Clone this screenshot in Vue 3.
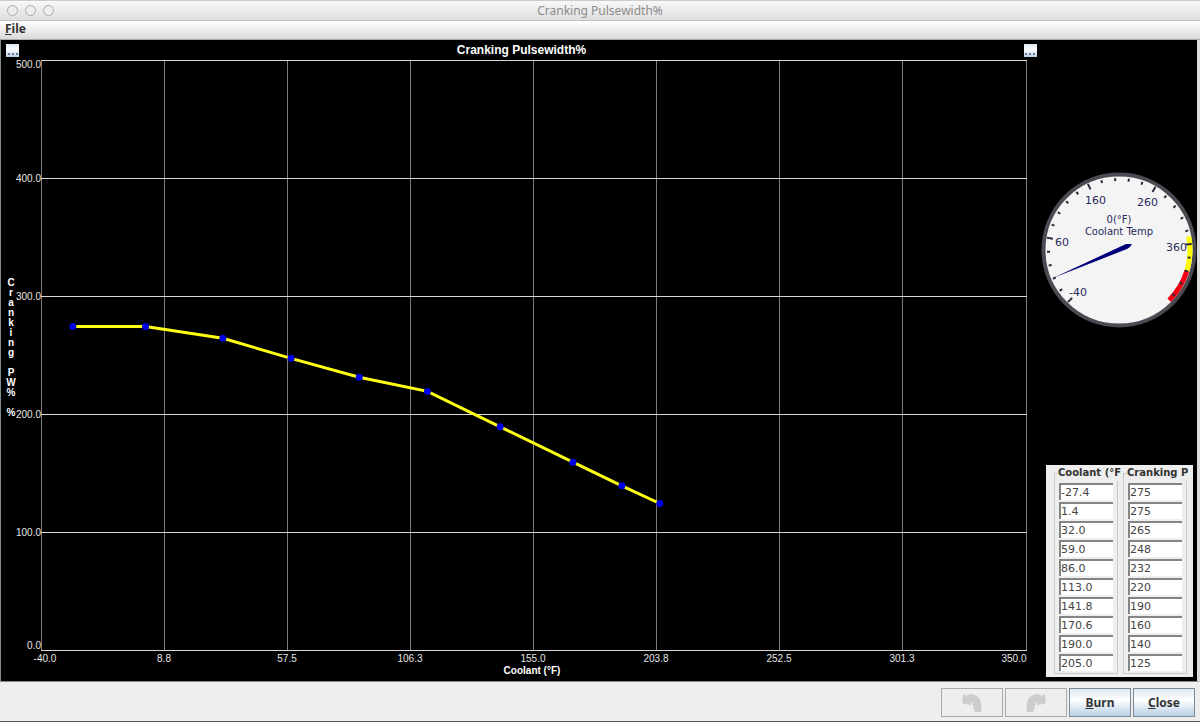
<script setup>
import { computed, ref } from 'vue'

const coolant = ref(['-27.4', '1.4', '32.0', '59.0', '86.0', '113.0', '141.8', '170.6', '190.0', '205.0'])
const cranking = ref(['275', '275', '265', '248', '232', '220', '190', '160', '140', '125'])

// plot area inside the svg
const plot = { left: 41, right: 1026, top: 0, bottom: 590 }
const xMin = -40
const xMax = 350
const yMax = 500

const xPos = (v) => plot.left + ((v - xMin) / (xMax - xMin)) * (plot.right - plot.left)
const yPos = (v) => plot.bottom - (v / yMax) * (plot.bottom - plot.top)

const xTicks = ['-40.0', '8.8', '57.5', '106.3', '155.0', '203.8', '252.5', '301.3', '350.0'].map((label, i) => {
  const x = Math.floor(xPos(xMin + (i * (xMax - xMin)) / 8))
  let textX = x
  if (i === 0) textX = x + 4
  if (i === 8) textX = x - 12
  return { label, x, textX }
})

const yTicks = [500, 400, 300, 200, 100, 0].map((v) => {
  const y = yPos(v)
  let textY = y + 4
  if (v === 500) textY = y + 8
  if (v === 0) textY = y - 1
  return { label: v.toFixed(1), y, textY }
})

const yTitle = 'Cranking PW% %'.split('')

const points = computed(() => coolant.value.map((c, i) => ({
  x: xPos(Number(c) || 0),
  y: yPos(Number(cranking.value[i]) || 0) + 1
})))
const line = computed(() => points.value.map((p) => `${p.x},${p.y}`).join(' '))

// gauge: one tick for every 20 degrees F, -40 to 440
const polar = (deg, r) => {
  const a = (deg * Math.PI) / 180
  return { x: 78 + r * Math.cos(a), y: 78 - r * Math.sin(a) }
}
const arc = (from, to, r) => {
  const a = polar(from, r)
  const b = polar(to, r)
  return `M${a.x} ${a.y} A${r} ${r} 0 0 1 ${b.x} ${b.y}`
}
const gaugeTicks = Array.from({ length: 25 }, (_, i) => {
  const deg = 225.6 - i * 11.04
  const major = i % 5 === 0
  return { a: polar(deg, major ? 67 : 69), b: polar(deg, major ? 73 : 72) }
})
</script>

<template>
  <div class="window">
    <header class="titlebar">
      <div class="lights">
        <span></span><span></span><span></span>
      </div>
      <div class="titel">Cranking Pulsewidth%</div>
    </header>

    <nav class="menubar">
      <button class="menu"><u>F</u>ile</button>
    </nav>

    <main class="content">
      <section class="chart">
        <div class="charthead">
          <button class="dots" aria-label="Y axis options"><i></i><i></i><i></i></button>
          <h1>Cranking Pulsewidth%</h1>
          <button class="dots" aria-label="Chart options"><i></i><i></i><i></i></button>
        </div>
        <svg class="graph" viewBox="1 0 1040 621">
          <g class="vertical">
            <line v-for="t in xTicks" :key="t.label" :x1="t.x + 0.5" :x2="t.x + 0.5" y1="0" y2="590" />
          </g>
          <g class="horizontal">
            <line v-for="t in yTicks" :key="t.label" x1="41" x2="1027" :y1="t.y + 0.5" :y2="t.y + 0.5" />
          </g>
          <text v-for="t in yTicks" :key="'y' + t.label" class="tick" x="41" :y="t.textY" text-anchor="end">{{ t.label }}</text>
          <text v-for="t in xTicks" :key="'x' + t.label" class="tick" :x="t.textX" y="602" text-anchor="middle">{{ t.label }}</text>
          <text v-for="(c, i) in yTitle" :key="i" class="axis" x="11" :y="226 + i * 10" text-anchor="middle">{{ c }}</text>
          <text class="axis" x="532" y="614" text-anchor="middle">Coolant (°F)</text>
          <polyline class="curve" :points="line" />
          <circle v-for="(p, i) in points" :key="'p' + i" class="point" :cx="p.x" :cy="p.y" r="3.5" />
        </svg>
      </section>

      <aside class="side">
        <svg class="gauge" viewBox="0 0 156 156">
          <circle cx="78" cy="78" r="75.5" fill="#f4f4f5" stroke="#4b4a52" stroke-width="4" />
          <path class="zone yellow" :d="arc(11, -17, 71)" />
          <path class="zone red" :d="arc(-17, -45, 71)" />
          <line v-for="(t, i) in gaugeTicks" :key="i" class="mark" :x1="t.a.x" :y1="t.a.y" :x2="t.b.x" :y2="t.b.y" />
          <g class="numbers">
            <text x="28" y="124">-40</text>
            <text x="14" y="74">60</text>
            <text x="44" y="32">160</text>
            <text x="96" y="34">260</text>
            <text x="125" y="79">360</text>
          </g>
          <g class="caption">
            <text x="78" y="51">0(°F)</text>
            <text x="78" y="63">Coolant Temp</text>
          </g>
          <polygon points="12,106 85,72 91,72 89,75 86,77" fill="#00007a" />
        </svg>

        <div class="tables">
          <fieldset>
            <legend>Coolant (°F</legend>
            <input v-for="(v, i) in coolant" :key="i" v-model="coolant[i]" type="text" :aria-label="'Coolant ' + (i + 1)">
          </fieldset>
          <fieldset>
            <legend>Cranking P</legend>
            <input v-for="(v, i) in cranking" :key="i" v-model="cranking[i]" type="text" :aria-label="'Cranking ' + (i + 1)">
          </fieldset>
        </div>
      </aside>
    </main>

    <footer class="buttons">
      <button class="btn" disabled aria-label="Undo">
        <svg width="22" height="20" viewBox="0 0 22 20">
          <path d="M2 1 L5 3 C9 0 14 1 17 4 C21 8 21 14 20 19 L14 19 C13 17 12 15 12 12 L11 9 L9 9 L11 12 L3 11 L1 9 Z" />
        </svg>
      </button>
      <button class="btn" disabled aria-label="Redo">
        <svg width="22" height="20" viewBox="0 0 22 20">
          <path d="M20 1 L17 3 C13 0 8 1 5 4 C1 8 1 14 2 19 L8 19 C9 17 10 15 10 12 L11 9 L13 9 L11 12 L19 11 L21 9 Z" />
        </svg>
      </button>
      <button class="btn"><u>B</u>urn</button>
      <button class="btn"><u>C</u>lose</button>
    </footer>
  </div>
</template>

<style>
body {
  margin: 0;
  background: #000;
}
</style>

<style scoped>
.window {
  display: flex;
  flex-direction: column;
  min-height: 100vh;
  box-sizing: border-box;
  border-bottom: 1px solid #555;
  background: #eee;
  font-family: "Noto Sans", "Open Sans", sans-serif;
  color: #333;
}

.titlebar {
  display: grid;
  grid-template-columns: 1fr auto 1fr;
  align-items: center;
  height: 21px;
  box-sizing: border-box;
  border-top: 1px solid #ccc;
  border-bottom: 1px solid #c4c4c4;
  background: linear-gradient(#f8f8f8, #dedede);
}

.lights {
  display: flex;
  gap: 7px;
  padding-left: 7px;
}

.lights span {
  width: 9px;
  height: 9px;
  border: 1px solid #aaa;
  border-radius: 50%;
  background: #eee;
}

.titel {
  font-size: 12px;
  line-height: 18px;
  color: #8c8c8c;
}

.menubar {
  height: 19px;
  box-sizing: border-box;
  border-bottom: 1px solid #aaa;
  background: linear-gradient(#fff, #dadada);
}

.menu {
  display: block;
  padding: 0 5px;
  border: 0;
  background: none;
  font: bold 12px/16px "Noto Sans", sans-serif;
  color: #333;
}

.content {
  display: flex;
  flex: 1;
  border-left: 1px solid #7f8c8c;
  border-right: 3px solid #ddd;
  border-bottom: 1px solid #888;
  background: #000;
}

.chart {
  flex: 1;
  min-width: 0;
}

.charthead {
  display: flex;
  justify-content: space-between;
  align-items: center;
  height: 20px;
  padding: 0 4px 0 5px;
}

.charthead h1 {
  margin: 0;
  font: bold 12px/20px "Liberation Sans", sans-serif;
  color: #fff;
}

.dots {
  display: flex;
  justify-content: center;
  align-items: flex-end;
  gap: 2px;
  width: 13px;
  height: 13px;
  padding: 0 0 2px;
  border: 0;
  background: linear-gradient(#dde8f3, #fff 40%, #b8cfe5);
}

.dots i {
  width: 2px;
  height: 2px;
  background: #6b7d92;
}

.graph {
  display: block;
  width: 100%;
}

.vertical line {
  stroke: #7c7c7c;
}

.horizontal line {
  stroke: #d8d8d8;
}

.tick {
  font: 10px "Liberation Sans", sans-serif;
  fill: #e6e6e6;
}

.axis {
  font: bold 10px "Liberation Sans", sans-serif;
  fill: #fff;
}

.curve {
  fill: none;
  stroke: #ffff14;
  stroke-width: 3;
}

.point {
  fill: #0000e6;
}

.side {
  display: flex;
  flex-direction: column;
  justify-content: space-between;
  width: 156px;
  padding: 132px 0 4px;
  box-sizing: border-box;
}

.gauge {
  display: block;
  width: 100%;
}

.zone {
  fill: none;
  stroke-width: 5;
}

.yellow {
  stroke: #ff0;
}

.red {
  stroke: #f00010;
}

.mark {
  stroke: #2c2c3c;
  stroke-width: 2;
}

.numbers,
.caption {
  font: 11px "DejaVu Sans", sans-serif;
  fill: #2a2a5c;
}

.caption {
  font-size: 10px;
  text-anchor: middle;
}

.tables {
  display: flex;
  gap: 5px;
  margin: 0 4px 0 5px;
  padding: 0 6px 3px 8px;
  background: #eee;
}

fieldset {
  display: flex;
  flex-direction: column;
  flex: 1;
  gap: 2px;
  min-width: 0;
  margin: 0;
  padding: 2px 4px;
  border: 1px solid #ccc;
}

legend {
  margin-left: -1px;
  padding: 0;
  font: bold 10px/16px "DejaVu Sans", sans-serif;
  white-space: nowrap;
}

input {
  width: 100%;
  height: 17px;
  padding: 0;
  box-sizing: border-box;
  border: 0 solid #858585;
  border-width: 2px 0 0 2px;
  background: #fff;
  font: 11px "DejaVu Sans", sans-serif;
  color: #444;
}

.buttons {
  display: flex;
  justify-content: flex-end;
  gap: 2px;
  padding: 6px 5px 4px;
}

.btn {
  display: flex;
  justify-content: center;
  align-items: center;
  width: 62px;
  height: 29px;
  padding: 0;
  border: 1px solid #7a8a99;
  background: linear-gradient(#dde8f3, #fff 40%, #b8cfe5);
  font: bold 12px "Noto Sans", sans-serif;
  color: #333;
}

.btn:disabled {
  border-color: #aaa;
  background: #eee;
}

.btn path {
  fill: #ccc;
}
</style>
